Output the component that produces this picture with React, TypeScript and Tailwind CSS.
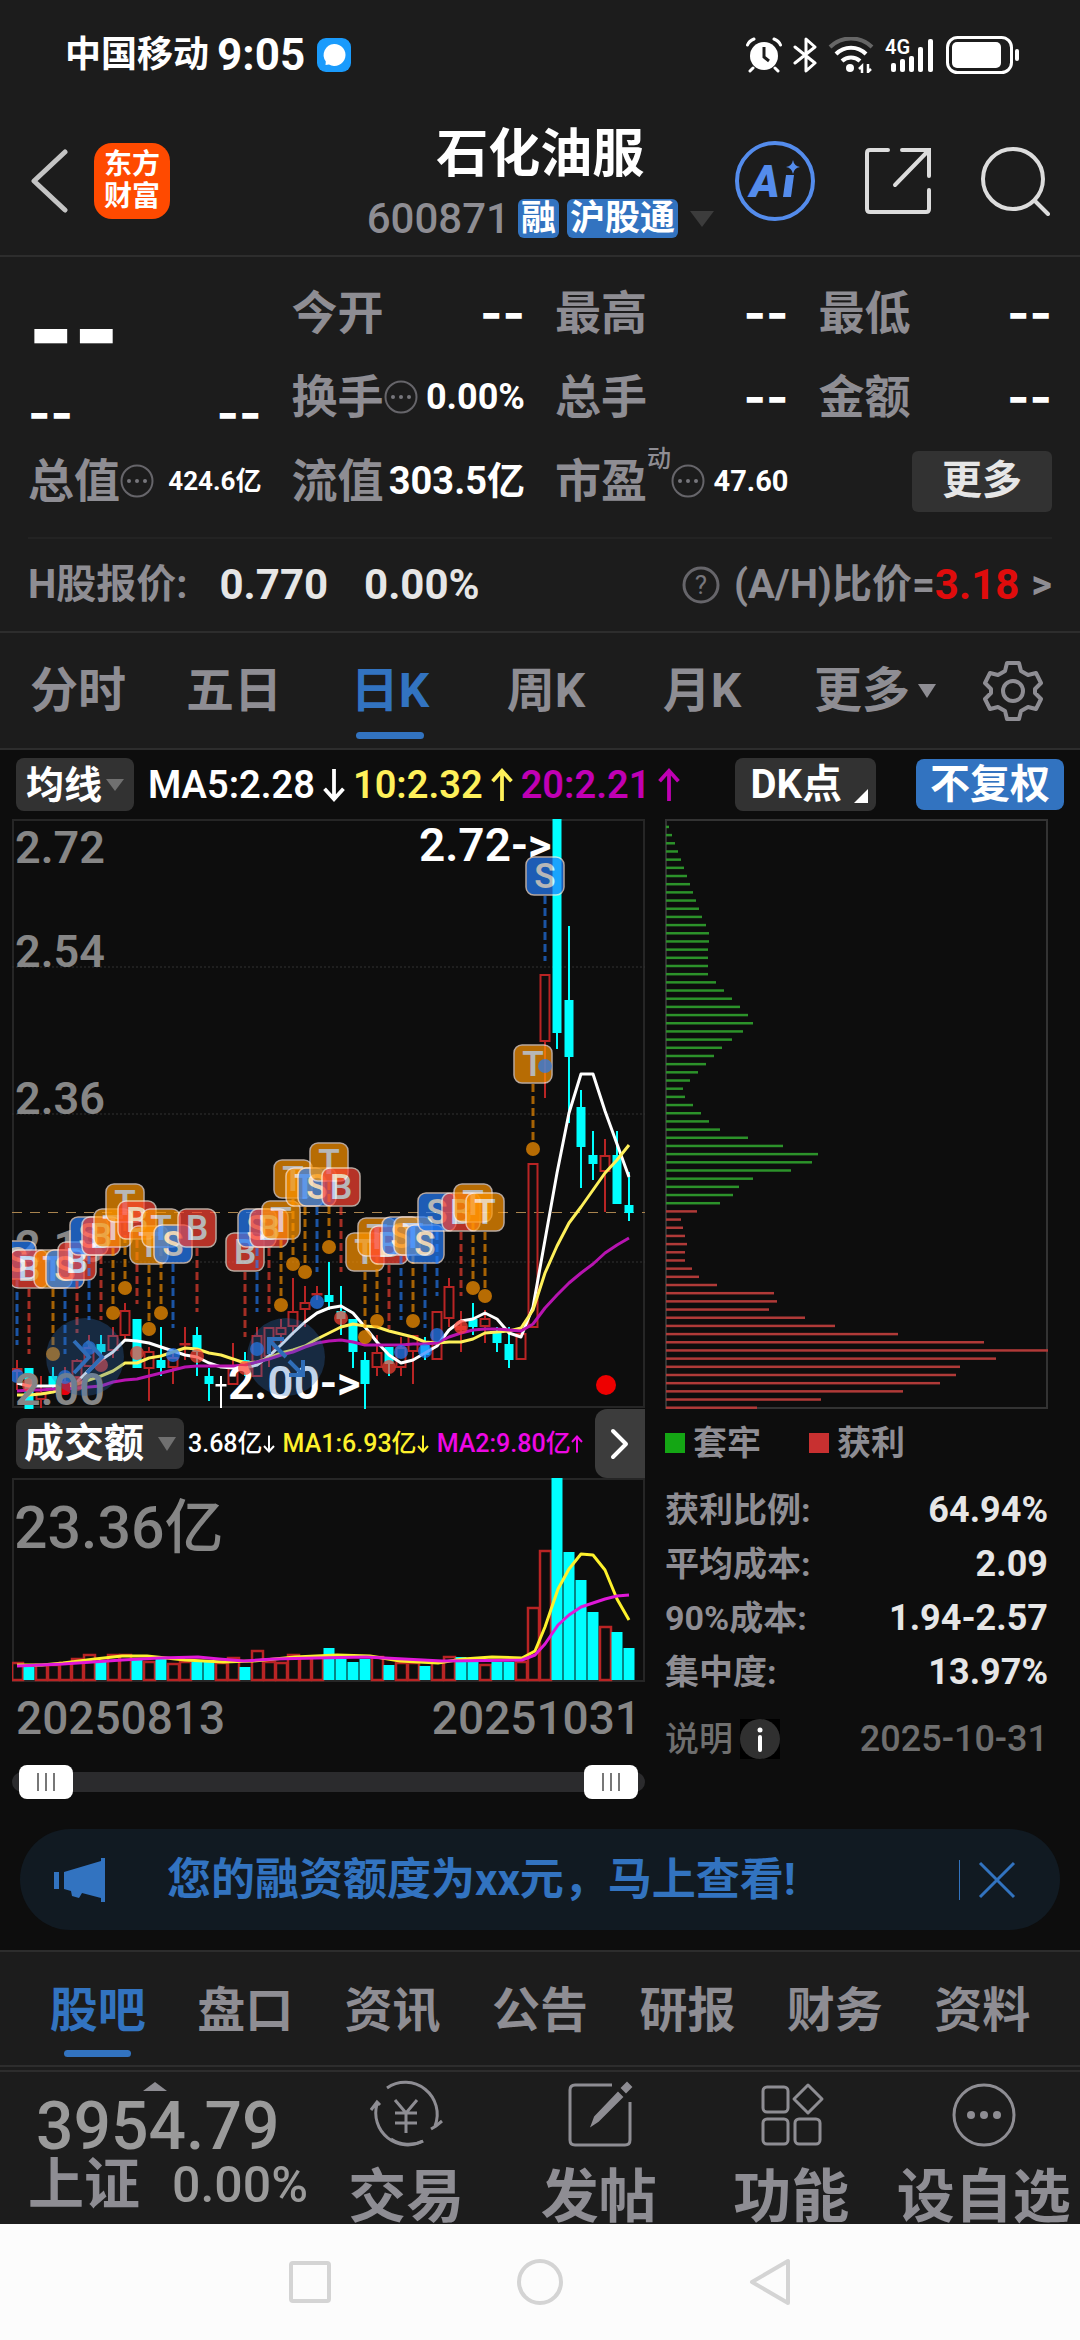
import type { ReactNode } from 'react';
import clsx from 'clsx';

type Signal = {
  kind: 'B' | 'S' | 'T';
  i: number;
  y: number;
  end: number;
  dot?: number;
};

// [direction, high, body top, body bottom, low]
type Candle = ['u' | 'd' | 'n', number, number, number, number];

const CANDLES: Candle[] = [
  ['u', 541, 549, 553, 571],
  ['d', 549, 549, 590, 590],
  ['u', 557, 573, 581, 589],
  ['d', 548, 557, 566, 571],
  ['u', 548, 563, 574, 574],
  ['u', 540, 541, 559, 559],
  ['u', 516, 528, 548, 548],
  ['d', 516, 525, 533, 541],
  ['u', 508, 516, 532, 539],
  ['u', 484, 491, 517, 520],
  ['d', 500, 500, 549, 549],
  ['u', 528, 532, 550, 582],
  ['d', 508, 541, 549, 557],
  ['u', 532, 538, 549, 565],
  ['u', 508, 524, 525, 541],
  ['d', 508, 516, 533, 557],
  ['d', 549, 557, 565, 582],
  ['n', 557, 565, 566, 589],
  ['u', 524, 548, 566, 566],
  ['d', 533, 541, 548, 557],
  ['u', 508, 516, 558, 558],
  ['u', 508, 508, 538, 548],
  ['u', 500, 508, 516, 524],
  ['u', 459, 492, 508, 516],
  ['u', 467, 483, 491, 508],
  ['u', 467, 474, 476, 481],
  ['d', 443, 476, 483, 491],
  ['d', 467, 492, 500, 516],
  ['d', 500, 500, 533, 549],
  ['d', 533, 541, 565, 590],
  ['u', 516, 533, 549, 557],
  ['d', 528, 528, 545, 557],
  ['u', 518, 528, 549, 557],
  ['u', 516, 516, 533, 565],
  ['d', 518, 526, 536, 541],
  ['u', 492, 492, 541, 541],
  ['u', 459, 467, 500, 508],
  ['u', 492, 507, 511, 533],
  ['d', 484, 500, 508, 516],
  ['u', 491, 499, 508, 524],
  ['d', 508, 514, 524, 533],
  ['d', 508, 525, 541, 549],
  ['u', 514, 514, 541, 541],
  ['u', 344, 344, 509, 509],
  ['u', 155, 155, 223, 279],
  ['d', 0, 0, 214, 230],
  ['d', 107, 181, 238, 304],
  ['d', 271, 288, 328, 369],
  ['d', 312, 336, 345, 361],
  ['u', 320, 336, 353, 393],
  ['d', 312, 336, 385, 385],
  ['d', 353, 386, 394, 402],
];

const MA5 = [
  564, 567, 567, 567, 567, 563, 551, 541, 533, 521, 522, 524, 528, 532, 536, 538, 544, 548, 549, 549, 546, 537, 526,
  514, 503, 494, 489, 487, 494, 508, 523, 536, 544, 541, 534, 527, 511, 502, 500, 494, 500, 514, 518, 488, 421, 354,
  294, 255, 255, 292, 325, 358,
];
const MA10 = [
  576, 576, 575, 573, 569, 565, 561, 557, 552, 544, 544, 539, 537, 533, 529, 530, 534, 536, 540, 544, 543, 539, 534,
  531, 527, 520, 514, 508, 505, 507, 508, 512, 515, 518, 523, 524, 523, 523, 520, 514, 513, 512, 509, 491, 454, 427,
  404, 388, 371, 354, 341, 326,
];
const MA20 = [
  572, 571, 571, 570, 570, 569, 568, 567, 563, 561, 560, 557, 554, 551, 548, 547, 547, 547, 547, 546, 543, 540, 536,
  533, 528, 524, 522, 521, 523, 526, 526, 526, 526, 525, 525, 524, 518, 514, 511, 510, 510, 511, 512, 505, 489, 476,
  464, 454, 445, 434, 426, 419,
];

const SIGNALS: Signal[] = [
  { kind: 'S', i: 0, y: 441, end: 526, dot: 557 },
  { kind: 'B', i: 1, y: 450, end: 535, dot: 566 },
  { kind: 'T', i: 3, y: 450, end: 535, dot: 535 },
  { kind: 'S', i: 4, y: 450, end: 535, dot: 558 },
  { kind: 'B', i: 5, y: 442, end: 514, dot: 565 },
  { kind: 'S', i: 6, y: 417, end: 501, dot: 529 },
  { kind: 'B', i: 7, y: 417, end: 501, dot: 546 },
  { kind: 'T', i: 8, y: 409, end: 494, dot: 494 },
  { kind: 'T', i: 9, y: 384, end: 469, dot: 469 },
  { kind: 'B', i: 10, y: 401, end: 485, dot: 534 },
  { kind: 'T', i: 11, y: 426, end: 510, dot: 510 },
  { kind: 'T', i: 12, y: 409, end: 494, dot: 494 },
  { kind: 'S', i: 13, y: 425, end: 509, dot: 536 },
  { kind: 'B', i: 15, y: 409, end: 493, dot: 537 },
  { kind: 'B', i: 19, y: 433, end: 518, dot: 549 },
  { kind: 'S', i: 20, y: 409, end: 493, dot: 530 },
  { kind: 'B', i: 21, y: 409, end: 493 },
  { kind: 'T', i: 22, y: 401, end: 486, dot: 486 },
  { kind: 'T', i: 23, y: 360, end: 445, dot: 445 },
  { kind: 'T', i: 24, y: 368, end: 453, dot: 453 },
  { kind: 'S', i: 25, y: 368, end: 453, dot: 483 },
  { kind: 'T', i: 26, y: 343, end: 428, dot: 428 },
  { kind: 'B', i: 27, y: 368, end: 453, dot: 499 },
  { kind: 'T', i: 29, y: 433, end: 518, dot: 518 },
  { kind: 'T', i: 30, y: 418, end: 502, dot: 502 },
  { kind: 'B', i: 31, y: 426, end: 510, dot: 548 },
  { kind: 'S', i: 32, y: 417, end: 501, dot: 533 },
  { kind: 'T', i: 33, y: 417, end: 502, dot: 502 },
  { kind: 'S', i: 34, y: 425, end: 509, dot: 532 },
  { kind: 'S', i: 35, y: 393, end: 477, dot: 516 },
  { kind: 'B', i: 37, y: 393, end: 477, dot: 508 },
  { kind: 'T', i: 38, y: 384, end: 469, dot: 469 },
  { kind: 'T', i: 39, y: 393, end: 477, dot: 477 },
  { kind: 'T', i: 43, y: 245, end: 330, dot: 330 },
  { kind: 'S', i: 44, y: 57, end: 142, dot: 247 },
];

const SIGNAL_COLOR = { B: '#fd4233', S: '#247efd', T: '#ff9500' };

// tops of the turnover bars, r = up day, c = down day
const VOLUMES =
  'r184 c189 r186 r186 r184 r180 r176 c184 r176 r176 c181 r183 c181 r185 r183 c184 c183 r184 r179 c189 r172 r183 r184 r176 r179 r178 c170 c181 c184 c181 r178 c187 r184 r184 c188 r183 r178 c179 c183 r186 c184 c184 r183 r129 r72 c0 c74 c102 c134 r148 c154 c170'.split(
    ' ',
  );

const CHIPS = [
  3, 6, 9, 12, 15, 18, 21, 24, 27, 30, 33, 36, 40, 43, 43, 42, 42, 42, 42, 50, 58, 66, 74, 82, 87, 77, 66, 56, 48, 40,
  32, 24, 17, 19, 27, 35, 43, 54, 82, 117, 152, 146, 125, 87, 73, 67, 54, 31, 15, 17, 19, 21, 19, 19, 26, 33, 51, 108,
  111, 103, 139, 169, 232, 318, 383, 330, 294, 290, 274, 237, 155, 91,
];
const TRAPPED_COUNT = 47;

const cx = (i: number) => 5 + 12 * i;
const toPoints = (ys: number[]) => ys.map((y, i) => `${cx(i)},${y}`).join(' ');

function StatusBar() {
  return (
    <div className="flex h-[106px] items-center justify-between pt-1 pr-[60px] pl-[65px] text-white">
      <div className="flex items-center gap-2">
        <span className="text-4xl leading-none font-bold">中国移动</span>
        <span className="text-[44px] leading-none font-bold">9:05</span>
        <svg className="ml-1 size-[34px]" viewBox="0 0 34 34">
          <rect width="34" height="34" rx="9" fill="#1a9bfc" />
          <path d="M17 6a11 11 0 1 1-5 20.500l-3.500.500.300-3.500A11 11 0 0 1 17 6z" fill="#fff" />
        </svg>
      </div>
      <div className="flex items-center gap-[11px]">
        <svg className="size-9" viewBox="0 0 36 36" fill="none" stroke="#fff">
          <circle cx="18" cy="19" r="14" fill="#fff" stroke="none" />
          <path d="M1.500 8Q3 4 8 2M34.500 8Q33 4 28 2M7 31l-3 3M29 31l3 3" strokeWidth="3" strokeLinecap="round" />
          <path d="M18 10v10l5 4" stroke="#1c1c1c" strokeWidth="3" />
        </svg>
        <svg className="h-9 w-6" viewBox="0 0 24 36" fill="none" stroke="#fff" strokeWidth="3">
          <path d="M2 10l20 16-9 8V2l9 8L2 26" strokeLinejoin="round" strokeLinecap="round" />
        </svg>
        <svg className="h-9 w-[46px]" viewBox="0 0 46 36" fill="none" strokeWidth="4">
          <path d="M2 10a30 30 0 0 1 42 0" stroke="#666" />
          <path d="M8 17a21 21 0 0 1 30 0M14 24a13 13 0 0 1 18 0" stroke="#fff" />
          <circle cx="22" cy="31" r="4" fill="#fff" />
          <path d="M34 36v-7l-3 3M40 27v8l3-3" stroke="#fff" strokeWidth="2.500" />
        </svg>
        <svg className="h-9 w-[50px] overflow-visible" viewBox="0 0 50 36">
          <text x="0" y="17" fontSize="20" fill="#fff" fontWeight="600">
            4G
          </text>
          <g fill="#fff">
            <rect x="6" y="26" width="5" height="9" rx="2" />
            <rect x="15" y="22" width="5" height="13" rx="2" />
            <rect x="24" y="19" width="5" height="16" rx="2" />
            <rect x="33" y="10" width="5" height="25" rx="2" />
            <rect x="43" y="2" width="5" height="33" rx="2" />
          </g>
        </svg>
        <svg className="h-[38px] w-[74px]" viewBox="0 0 74 38">
          <rect x="1.500" y="1.500" width="64" height="35" rx="10" fill="none" stroke="#fff" strokeWidth="3" />
          <rect x="6" y="6" width="49" height="26" rx="5" fill="#fff" />
          <rect x="69" y="13" width="4" height="12" rx="2" fill="#fff" />
        </svg>
      </div>
    </div>
  );
}

function Header() {
  return (
    <header className="flex h-[151px] items-center border-b-2 border-[#2d2d2d] pr-[30px] pl-7">
      <div className="flex flex-1 items-center gap-6">
        <button type="button" aria-label="返回">
          <svg className="h-16 w-[42px]" viewBox="0 0 42 64" fill="none" stroke="#c4c4c4" strokeWidth="5">
            <path d="M37 3L6 32l31 29" strokeLinecap="round" strokeLinejoin="round" />
          </svg>
        </button>
        <div className="w-[76px] rounded-[18px] bg-[#ff4a00] py-[6px] text-center text-[28px] leading-8 font-bold text-white">
          东方
          <br />
          财富
        </div>
      </div>
      <div className="flex flex-col items-center gap-[18px] pt-[6px]">
        <h1 className="text-[52px] leading-[52px] font-bold text-white">石化油服</h1>
        <div className="flex items-center gap-2 text-[35px] leading-[39px] font-bold text-white">
          <span className="text-[42px] font-medium text-[#8e8d93]">600871</span>
          <span className="rounded-md bg-[#3273c0] px-[3px]">融</span>
          <span className="rounded-md bg-[#3273c0] px-[3px]">沪股通</span>
          <svg className="ml-1 h-4 w-6" viewBox="0 0 24 16">
            <path d="M0 0h24L12 16z" fill="#3c3c3c" />
          </svg>
        </div>
      </div>
      <div className="ml-5 flex flex-none items-center gap-12">
        <button type="button" aria-label="Ai">
          <svg className="size-[82px]" viewBox="0 0 82 82">
            <circle cx="41" cy="41" r="38" fill="none" stroke="#548cec" strokeWidth="4" />
            <text x="16" y="57" fontSize="45" fontWeight="900" fontStyle="italic" fill="#548cec">
              A
            </text>
            <path d="M52 35h8l-3 22h-8z" fill="#548cec" />
            <path d="M59 20q1 6 7 7-6 1-7 7-1-6-7-7 6-1 7-7z" fill="#548cec" />
          </svg>
        </button>
        <button type="button" aria-label="分享">
          <svg className="size-[68px]" viewBox="0 0 68 68" fill="none" stroke="#dcdcdc" strokeWidth="4">
            <path d="M24 3H6q-3 0-3 3v56q0 3 3 3h56q3 0 3-3V43M38 3h27v26M65 3L31 38" strokeLinecap="round" />
          </svg>
        </button>
        <button type="button" aria-label="搜索">
          <svg className="size-[70px]" viewBox="0 0 70 70" fill="none" stroke="#dcdcdc" strokeWidth="4">
            <circle cx="33" cy="33" r="30" />
            <path d="M55 55l13 13" strokeLinecap="round" />
          </svg>
        </button>
      </div>
    </header>
  );
}

function MoreDots() {
  return (
    <svg className="size-[34px] flex-none" viewBox="0 0 34 34" fill="#77767c">
      <circle cx="17" cy="17" r="15.500" fill="none" stroke="#66656a" strokeWidth="2" />
      <circle cx="9" cy="17" r="2" />
      <circle cx="17" cy="17" r="2" />
      <circle cx="25" cy="17" r="2" />
    </svg>
  );
}

function Dashes() {
  return <span className="font-[Inter] text-5xl leading-none font-bold text-white">--</span>;
}

function Stat({ label, children }: { label: string; children?: ReactNode }) {
  return (
    <div className="flex h-[84px] items-center">
      <span className="flex-none text-[46px] leading-none text-[#8e8d93]">{label}</span>
      {children}
    </div>
  );
}

function Quote() {
  return (
    <section>
      <div className="grid grid-cols-4 gap-x-[30px] px-7 pt-[14px] font-bold text-white">
        <div className="flex h-[84px] items-end font-[Inter] text-[96px] leading-[52px] font-black">--</div>
        <Stat label="今开">
          <span className="ml-auto">
            <Dashes />
          </span>
        </Stat>
        <Stat label="最高">
          <span className="ml-auto">
            <Dashes />
          </span>
        </Stat>
        <Stat label="最低">
          <span className="ml-auto">
            <Dashes />
          </span>
        </Stat>

        <div className="flex h-[84px] items-center justify-between pt-8">
          <Dashes />
          <Dashes />
        </div>
        <Stat label="换手">
          <MoreDots />
          <span className="ml-auto text-4xl leading-none">0.00%</span>
        </Stat>
        <Stat label="总手">
          <span className="ml-auto">
            <Dashes />
          </span>
        </Stat>
        <Stat label="金额">
          <span className="ml-auto">
            <Dashes />
          </span>
        </Stat>

        <Stat label="总值">
          <MoreDots />
          <span className="ml-auto text-[26px] leading-none">424.6亿</span>
        </Stat>
        <Stat label="流值">
          <span className="ml-auto text-[38px] leading-none">303.5亿</span>
        </Stat>
        <Stat label="市盈">
          <span className="self-start pt-2 text-2xl leading-none font-medium text-[#8e8d93]">动</span>
          <MoreDots />
          <span className="ml-auto text-[29px] leading-none">47.60</span>
        </Stat>
        <div className="flex h-[84px] items-center justify-end">
          <button type="button" className="h-[61px] rounded-md bg-[#323232] px-[30px] text-[40px] leading-none text-[#e6e6e6]">
            更多
          </button>
        </div>
      </div>
      <div className="mx-7 mt-[14px] border-t-2 border-[#232323]" />
      <a
        href="#ah"
        className="flex h-[94px] items-center border-b-2 border-[#2d2d2d] px-7 text-[40px] leading-none font-bold text-[#8e8d93]"
      >
        <span>H股报价:</span>
        <span className="ml-8 text-[42px] text-[#e6e6e6]">0.770</span>
        <span className="ml-9 text-[42px] text-[#e6e6e6]">0.00%</span>
        <svg className="mr-[14px] ml-auto size-[38px]" viewBox="0 0 38 38">
          <circle cx="19" cy="19" r="17" fill="none" stroke="#66656a" strokeWidth="3" />
          <text x="19" y="28" textAnchor="middle" fontSize="26" fontWeight="400" fill="#77767c">
            ?
          </text>
        </svg>
        <span>(A/H)比价=</span>
        <span className="text-[42px] text-[#e00c0c]">3.18</span>
        <span className="ml-3">&gt;</span>
      </a>
    </section>
  );
}

function PeriodTabs() {
  const tabs = ['分时', '五日', '日K', '周K', '月K'];
  return (
    <nav className="grid h-[117px] grid-cols-[156fr_156fr_156fr_156fr_156fr_190fr_86fr] items-center border-b-2 border-[#2d2d2d] pr-6 text-5xl leading-none font-bold text-[#8e8d93]">
      {tabs.map((t) => (
        <button key={t} type="button" className={clsx('relative py-6', t === '日K' && 'text-[#3273c0]')}>
          {t}
          {t === '日K' && <span className="absolute inset-x-11 bottom-0 h-[7px] rounded-full bg-[#3273c0]" />}
        </button>
      ))}
      <button type="button" className="flex items-center justify-center gap-2">
        更多
        <svg className="h-[14px] w-[18px]" viewBox="0 0 18 14">
          <path d="M0 0h18L9 14z" fill="#8e8d93" />
        </svg>
      </button>
      <button type="button" aria-label="设置" className="flex justify-center">
        <svg className="size-[60px]" viewBox="0 0 60 60" fill="none" stroke="#8e8d93" strokeWidth="4">
          <path
            d="M24 2h12l2 8 7 4 8-2 5 10-6 6v4l6 6-5 10-8-2-7 4-2 8H24l-2-8-7-4-8 2-5-10 6-6v-4l-6-6 5-10 8 2 7-4z"
            strokeLinejoin="round"
          />
          <circle cx="30" cy="30" r="10" />
        </svg>
      </button>
    </nav>
  );
}

function SignalMark({ kind, i, y, end, dot }: Signal) {
  const x = cx(i);
  const color = SIGNAL_COLOR[kind];
  return (
    <g className="opacity-70">
      <path d={`M${x} ${y + 20}V${end}`} stroke={color} strokeWidth="3" strokeDasharray="8 4" opacity="0.9" />
      {dot && <circle cx={x} cy={dot} r="7" fill={color} />}
      <rect x={x - 19} y={y - 19} width="38" height="38" rx="8" fill={color} stroke="#ffe9dc" strokeWidth="1.500" />
      <text x={x} y={y + 12} textAnchor="middle" fontSize="35" fontWeight="600" fill="#fff">
        {kind}
      </text>
    </g>
  );
}

function KLineChart() {
  return (
    <svg className="block w-full" viewBox="0 0 633 590">
      <rect x="1" y="1" width="631" height="587" fill="none" stroke="#262626" strokeWidth="2" />
      <path d="M0 148H633M0 295H633M0 443H633" stroke="#333" strokeDasharray="2 2" />
      <path d="M0 393.500H633" stroke="#a8834e" strokeDasharray="10 8" />
      <g fontSize="45" fontWeight="600" fill="#868686">
        <text x="3" y="44">2.72</text>
        <text x="3" y="148">2.54</text>
        <text x="3" y="295">2.36</text>
        <text x="3" y="443">2.18</text>
      </g>
      {CANDLES.map(([dir, high, top, bottom, low], i) => {
        const x = cx(i);
        const color = dir === 'u' ? '#b92424' : dir === 'd' ? '#00ffff' : '#ffffff';
        return (
          <g key={i} stroke={color} strokeWidth="2" fill="none">
            <path d={`M${x} ${high}V${top}M${x} ${bottom}V${low}`} />
            {dir === 'd' ? (
              <rect x={x - 4.5} y={top} width="9" height={bottom - top} fill={color} stroke="none" />
            ) : (
              <rect x={x - 4.5} y={top + 1} width="9" height={Math.max(bottom - top - 2, 0.5)} />
            )}
          </g>
        );
      })}
      <g fill="none" strokeWidth="3" strokeLinejoin="round">
        <polyline points={toPoints(MA5)} stroke="#fff" />
        <polyline points={toPoints(MA10)} stroke="#fef05a" />
        <polyline points={toPoints(MA20)} stroke="#b714b0" />
      </g>
      <rect x="48" y="562" width="10" height="14" rx="4" fill="#e8000c" />
      <g fontSize="46" fontWeight="600" fill="#fff">
        <text x="407" y="42">2.72-&gt;</text>
        <text x="216" y="580">2.00-&gt;</text>
      </g>
      {SIGNALS.map((s) => (
        <SignalMark key={s.i} {...s} />
      ))}
      <text x="3" y="586" fontSize="45" fontWeight="600" fill="#868686">
        2.00
      </text>
      <g fill="#2d6db8" fillOpacity="0.3">
        <circle cx="73" cy="538" r="39" />
        <circle cx="274" cy="538" r="39" />
      </g>
      <g fill="none" stroke="#2f6db8" strokeWidth="4">
        <path d="M62 522l15 16-15 16M75 522l15 16-15 16" />
        <path d="M274 538l-17-17M257 535v-15h15M277 542l14 14M277 556h14v-15" />
      </g>
      <circle cx="594" cy="566" r="10" fill="#ee0000" />
    </svg>
  );
}

function VolumeChart() {
  return (
    <svg className="block w-full" viewBox="0 0 633 204">
      <rect x="1" y="1" width="631" height="202" fill="none" stroke="#262626" strokeWidth="2" />
      <text x="2" y="70" fontSize="59" fontWeight="500" fill="#868686">
        23.36亿
      </text>
      {VOLUMES.map((v, i) => {
        const y = Number(v.slice(1));
        return v[0] === 'c' ? (
          <rect key={i} x={cx(i) - 5.5} y={y} width="11" height={202 - y} fill="#00ffff" />
        ) : (
          <rect key={i} x={cx(i) - 5} y={y + 1} width="11" height={201 - y} fill="none" stroke="#b92424" strokeWidth="2.500" />
        );
      })}
      <g fill="none" strokeWidth="3" strokeLinejoin="round">
        <polyline
          stroke="#fdf12c"
          points="5,187 30,187 51,185 83,181 110,178 135,178 173,182 211,184 241,183 283,179 325,177 358,178 388,183 426,185 451,181 480,179 510,180 523,173 533,149 546,111 557,91 569,76 581,77 593,92 605,121 617,142"
        />
        <polyline
          stroke="#e018d8"
          points="5,188 51,186 110,182 148,180 186,179 207,181 232,183 262,181 304,180 354,179 392,181 430,183 510,182 523,177 533,166 546,147 557,137 569,129 581,125 593,121 605,118 617,117"
        />
      </g>
    </svg>
  );
}

function Arrow({ up, className }: { up?: boolean; className?: string }) {
  return (
    <svg className={className} viewBox="0 0 24 36" fill="none" stroke="currentColor" strokeWidth="4">
      <path d={up ? 'M12 35V4M2 14L12 3l10 11' : 'M12 1v31M2 22l10 11 10-11'} />
    </svg>
  );
}

function RangeSlider() {
  const thumb =
    'pointer-events-none absolute inset-x-[7px] top-0 h-[34px] appearance-none bg-transparent [&::-webkit-slider-thumb]:pointer-events-auto [&::-webkit-slider-thumb]:h-[34px] [&::-webkit-slider-thumb]:w-[54px] [&::-webkit-slider-thumb]:appearance-none [&::-webkit-slider-thumb]:rounded-lg [&::-webkit-slider-thumb]:bg-white [&::-webkit-slider-thumb]:bg-[linear-gradient(90deg,transparent_18px,#777_18px,#777_20px,transparent_20px,transparent_26px,#777_26px,#777_28px,transparent_28px,transparent_34px,#777_34px,#777_36px,transparent_36px)] [&::-webkit-slider-thumb]:bg-[length:100%_18px] [&::-webkit-slider-thumb]:bg-center [&::-webkit-slider-thumb]:bg-no-repeat';
  return (
    <div className="relative mt-6 flex h-[34px] items-center">
      <div className="h-5 w-full rounded-full bg-[#2b2b2d]" />
      <input type="range" aria-label="开始日期" defaultValue={0} className={thumb} />
      <input type="range" aria-label="结束日期" defaultValue={100} className={thumb} />
    </div>
  );
}

function ChipPanel() {
  const rows = [
    ['获利比例:', '64.94%'],
    ['平均成本:', '2.09'],
    ['90%成本:', '1.94-2.57'],
    ['集中度:', '13.97%'],
  ];
  return (
    <div className="font-medium text-[#8e8d93]">
      <svg className="block w-full" viewBox="0 0 383 590">
        <rect x="1" y="1" width="381" height="588" fill="none" stroke="#333" strokeWidth="2" />
        {CHIPS.map((w, i) => (
          <rect key={i} x="1" y={8.18 * (i + 1) - 1.5} width={w} height="2.500" fill={i < TRAPPED_COUNT ? '#2c922a' : '#b03a38'} />
        ))}
      </svg>
      <div className="mt-[14px] flex h-10 items-center text-[34px] leading-none font-bold">
        <span className="mr-2 size-5 bg-[#14a614]" />
        套牢
        <span className="mr-2 ml-12 size-5 bg-[#c83030]" />
        获利
      </div>
      <table className="mt-5 w-full">
        <tbody>
          {rows.map(([label, value]) => (
            <tr key={label} className="h-[54px] font-bold">
              <th scope="row" className="text-left text-[34px] leading-none">
                {label}
              </th>
              <td className="text-right text-4xl leading-none text-[#e6e6e6]">{value}</td>
            </tr>
          ))}
        </tbody>
      </table>
      <div className="mt-5 flex items-center text-[34px] leading-none text-[#6e6e6e]">
        说明
        <button type="button" aria-label="说明" className="ml-[7px] bg-black">
          <svg className="size-10" viewBox="0 0 40 40">
            <circle cx="20" cy="20" r="20" fill="#303030" />
            <circle cx="20" cy="11" r="2.500" fill="#fff" />
            <path d="M20 18v13" stroke="#fff" strokeWidth="4" strokeLinecap="round" />
          </svg>
        </button>
        <span className="ml-auto text-4xl leading-none">2025-10-31</span>
      </div>
    </div>
  );
}

function Charts() {
  return (
    <section className="bg-[#0d0d0d]">
      <div className="flex h-[69px] items-center px-4 text-[38px] leading-none font-bold text-white">
        <button type="button" className="flex h-[53px] items-center gap-1 rounded-lg bg-[#323232] px-[10px]">
          均线
          <svg className="h-3 w-[18px]" viewBox="0 0 18 12">
            <path d="M0 0h18L9 12z" fill="#707070" />
          </svg>
        </button>
        <div className="ml-[14px] flex items-center gap-[7px] font-semibold">
          <span>MA5:2.28</span>
          <Arrow className="h-[34px] w-6" />
          <span className="text-[#fef05a]">10:2.32</span>
          <Arrow up className="h-[34px] w-6 text-[#fef05a]" />
          <span className="text-[#c000b4]">20:2.21</span>
          <Arrow up className="h-[34px] w-6 text-[#c000b4]" />
        </div>
        <button type="button" className="ml-auto flex h-[53px] items-center gap-3 rounded-lg bg-[#323232] pr-2 pl-4 text-[40px] leading-none">
          DK点
          <svg className="mb-2 size-[14px] self-end" viewBox="0 0 14 14">
            <path d="M14 0v14H0z" fill="#fff" />
          </svg>
        </button>
        <button type="button" className="ml-10 h-[51px] rounded-lg bg-[#3273c0] px-[14px] text-[40px] leading-none">
          不复权
        </button>
      </div>

      <div className="grid grid-cols-[633fr_383fr] gap-5 pr-8 pl-3">
        <div className="min-w-0">
          <KLineChart />
          <div className="flex h-[69px] items-center pl-1 leading-none font-medium text-white">
            <button
              type="button"
              className="flex h-[51px] flex-none items-center gap-[14px] rounded-lg bg-[#323232] px-2 text-[40px] leading-none font-bold whitespace-nowrap"
            >
              成交额
              <svg className="h-[14px] w-[18px]" viewBox="0 0 18 14">
                <path d="M0 0h18L9 14z" fill="#707070" />
              </svg>
            </button>
            <div className="ml-1 flex items-center gap-2 text-[25px] leading-none whitespace-nowrap">
              <span className="flex items-center">
                3.68亿
                <Arrow className="h-9 w-3" />
              </span>
              <span className="flex items-center text-[#fdf12c]">
                MA1:6.93亿
                <Arrow className="h-9 w-3" />
              </span>
              <span className="flex items-center text-[#ee08e4]">
                MA2:9.80亿
                <Arrow up className="h-9 w-3" />
              </span>
            </div>
            <button
              type="button"
              aria-label="更多指标"
              className="ml-auto flex h-[69px] w-[50px] flex-none items-center justify-center rounded-l-xl bg-[#3c3c3c]"
            >
              <svg className="h-8 w-5" viewBox="0 0 20 32" fill="none" stroke="#fff" strokeWidth="4">
                <path d="M3 3l13 13L3 29" strokeLinecap="round" strokeLinejoin="round" />
              </svg>
            </button>
          </div>
          <VolumeChart />
          <div className="mt-[13px] flex justify-between px-1 text-[46px] leading-[46px] font-medium text-[#868686]">
            <span>20250813</span>
            <span>20251031</span>
          </div>
          <RangeSlider />
        </div>
        <ChipPanel />
      </div>

      <div className="mx-5 mt-[30px] flex h-[101px] items-center rounded-full bg-[#111a22] pr-11 pl-[33px] text-[#3273c0]">
        <svg className="h-[46px] w-[54px]" viewBox="0 0 54 46" fill="currentColor">
          <path d="M1 15h5v17H1zM11 15L48 4V1h4v44h-4v-4l-19-5-3 5-7-2-1-5-7-2z" />
        </svg>
        <a href="#margin" className="ml-[60px] text-[44px] leading-none font-bold">
          您的融资额度为xx元，马上查看!
        </a>
        <span className="ml-auto h-10 w-px bg-[#3273c0]" />
        <button type="button" aria-label="关闭" className="ml-[18px]">
          <svg className="size-[38px]" viewBox="0 0 38 38" stroke="currentColor" strokeWidth="3">
            <path d="M2 2l34 34M36 2L2 36" />
          </svg>
        </button>
      </div>
      <div className="h-5" />
    </section>
  );
}

function InfoTabs() {
  const tabs = ['股吧', '盘口', '资讯', '公告', '研报', '财务', '资料'];
  return (
    <nav className="grid h-[117px] grid-cols-7 border-y-2 border-[#2d2d2d] px-6 text-5xl leading-none font-bold text-[#8e8d93]">
      {tabs.map((t, i) => (
        <button key={t} type="button" className={clsx('relative pt-1', i === 0 && 'text-[#3273c0]')}>
          {t}
          {i === 0 && <span className="absolute inset-x-10 bottom-2 h-[7px] rounded-full bg-[#3273c0]" />}
        </button>
      ))}
    </nav>
  );
}

function ActionBar() {
  const actions: { label: string; icon: ReactNode }[] = [
    {
      label: '交易',
      icon: (
        <>
          <path d="M18 10A32 32 0 0 1 66 48M62 51l5-3 6-5M22 61a32 32 0 0 0 32 2" />
          <path d="M54 63a32 32 0 0 1-46-37M2 32l6-8 3 3" />
          <path d="M26 22l11 13 11-13M37 35v20M26 35h22M26 45h22" strokeWidth="3" />
        </>
      ),
    },
    {
      label: '发帖',
      icon: (
        <>
          <path d="M50 7H13q-5 0-5 5v50q0 5 5 5h50q5 0 5-5V24" />
          <path d="M30 47l3-8L56 15l4 4-24 24zM60 10l5-5 4 4-5 5z" fill="currentColor" strokeWidth="2" />
        </>
      ),
    },
    {
      label: '功能',
      icon: (
        <>
          <rect x="9" y="9" width="25" height="25" rx="4" />
          <rect x="9" y="41" width="25" height="25" rx="4" />
          <rect x="41" y="41" width="25" height="25" rx="4" />
          <path d="M54 7l14 14-14 14-14-14z" strokeLinejoin="round" />
        </>
      ),
    },
    {
      label: '设自选',
      icon: (
        <>
          <circle cx="37" cy="37" r="30" />
          <g fill="currentColor" stroke="none">
            <circle cx="24" cy="37" r="4" />
            <circle cx="37" cy="37" r="4" />
            <circle cx="50" cy="37" r="4" />
          </g>
        </>
      ),
    },
  ];
  return (
    <div className="mt-[3px] flex h-[154px] overflow-hidden border-t-2 border-[#2d2d2d] font-medium text-[#8e8d93]">
      <button type="button" className="flex w-[310px] flex-none flex-col pt-[10px] pl-7 text-left">
        <svg className="ml-[115px] h-[9px] w-6" viewBox="0 0 24 9">
          <path d="M0 9h24L12 0z" fill="#8e8d93" />
        </svg>
        <span className="pl-2 text-[66px] leading-[72px] text-[#9a9a9a]">3954.79</span>
        <span className="flex items-center gap-8 leading-[44px] whitespace-nowrap">
          <span className="text-[56px] font-bold">上证</span>
          <span className="text-[50px] text-[#9a9a9a]">0.00%</span>
        </span>
      </button>
      <div className="grid flex-1 grid-cols-4">
        {actions.map((a) => (
          <button key={a.label} type="button" className="flex flex-col items-center gap-4 pt-[6px] whitespace-nowrap">
            <svg className="size-[74px] flex-none" viewBox="0 0 74 74" fill="none" stroke="currentColor" strokeWidth="3">
              {a.icon}
            </svg>
            <span className="text-[58px] leading-[58px] font-bold">{a.label}</span>
          </button>
        ))}
      </div>
    </div>
  );
}

function SystemNav() {
  return (
    <div className="flex h-[116px] items-center justify-center gap-[182px] bg-[#fcfcfc]">
      <button type="button" aria-label="最近任务">
        <svg className="size-12" viewBox="0 0 48 48" fill="none" stroke="#d4d4d4" strokeWidth="4">
          <rect x="5" y="5" width="38" height="38" rx="2" />
        </svg>
      </button>
      <button type="button" aria-label="主页">
        <svg className="size-12" viewBox="0 0 48 48" fill="none" stroke="#d4d4d4" strokeWidth="4">
          <circle cx="24" cy="24" r="21" />
        </svg>
      </button>
      <button type="button" aria-label="后退">
        <svg className="size-12" viewBox="0 0 48 48" fill="none" stroke="#d4d4d4" strokeWidth="4">
          <path d="M42 3v42L6 24z" strokeLinejoin="round" />
        </svg>
      </button>
    </div>
  );
}

export default function App() {
  return (
    <div className="min-h-screen bg-[#1c1c1c] font-[Roboto,'Noto_Sans_CJK_SC',sans-serif]">
      <StatusBar />
      <Header />
      <Quote />
      <PeriodTabs />
      <Charts />
      <InfoTabs />
      <ActionBar />
      <SystemNav />
    </div>
  );
}
